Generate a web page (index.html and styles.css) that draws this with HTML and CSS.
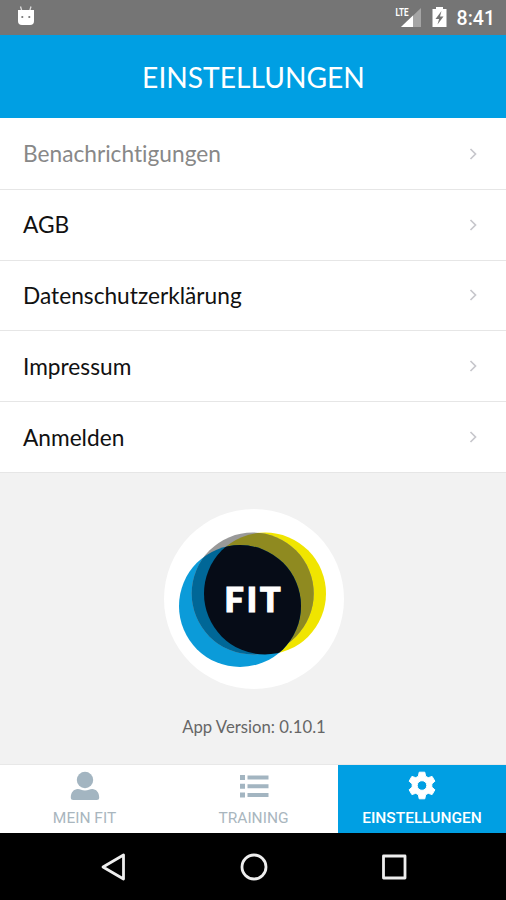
FILE: index.html
```
<!DOCTYPE html>
<html lang="de">
<head>
    <meta charset="UTF-8">
    <meta name="viewport" content="width=device-width, initial-scale=1.0">
    <title>Einstellungen</title>
    <link rel="stylesheet" href="styles.css">
</head>
<body>
    <div class="statusbar">
        <svg class="droid" width="18" height="22" viewBox="0 0 18 22">
            <path d="M3.500 .5l1.500 5M14 .5l-1.500 5" stroke="#ddd" stroke-width="1.300"/>
            <path d="M1 4h16v11q0 4-4 4H5q-4 0-4-4z" fill="#fff"/>
            <circle cx="5.300" cy="11" r="1.100" fill="#777"/>
            <circle cx="12.300" cy="11" r="1.100" fill="#777"/>
        </svg>
        <div class="status-icons">
            <svg width="27" height="22" viewBox="0 0 27 22">
                <path d="M26 2v19H6z" fill="#a5a5a5"/>
                <path d="M18 9.600V21H6z" fill="#fff"/>
                <text class="lte" x="0.500" y="9.500" textLength="13" lengthAdjust="spacingAndGlyphs">LTE</text>
            </svg>
            <svg width="15" height="22" viewBox="0 0 15 22">
                <path d="M4 1h7v2h3.500v18H.5V3H4z" fill="#fff"/>
                <path d="M9.500 5L3.500 13h3.600L5.500 18.500l6-8H8z" fill="#747474"/>
            </svg>
            <span class="clock">8:41</span>
        </div>
    </div>
    <header class="header">
        <h1>EINSTELLUNGEN</h1>
    </header>
    <main class="content">
        <ul class="list">
            <li class="disabled"><span>Benachrichtigungen</span><svg class="chevron" viewBox="0 0 8 12"><path d="M1.500 1l5 5-5 5"/></svg></li>
            <li><span>AGB</span><svg class="chevron" viewBox="0 0 8 12"><path d="M1.500 1l5 5-5 5"/></svg></li>
            <li><span>Datenschutzerklärung</span><svg class="chevron" viewBox="0 0 8 12"><path d="M1.500 1l5 5-5 5"/></svg></li>
            <li><span>Impressum</span><svg class="chevron" viewBox="0 0 8 12"><path d="M1.500 1l5 5-5 5"/></svg></li>
            <li><span>Anmelden</span><svg class="chevron" viewBox="0 0 8 12"><path d="M1.500 1l5 5-5 5"/></svg></li>
        </ul>
        <div class="about">
            <svg class="logo" width="180" height="180" viewBox="0 0 180 180">
                <defs>
                    <clipPath id="blue"><circle cx="76" cy="97" r="61"/></clipPath>
                    <clipPath id="yellow"><circle cx="101" cy="84.500" r="61"/></clipPath>
                </defs>
                <circle cx="90" cy="90" r="90" fill="#fff"/>
                <circle cx="101" cy="84.500" r="61" fill="#f0e500"/>
                <circle cx="76" cy="97" r="61" fill="#0b9bd9"/>
                <circle cx="88.700" cy="84.500" r="61" fill="#999"/>
                <circle cx="88.700" cy="84.500" r="61" fill="#8f8a20" clip-path="url(#yellow)"/>
                <circle cx="88.700" cy="84.500" r="61" fill="#006797" clip-path="url(#blue)"/>
                <g clip-path="url(#blue)">
                    <circle cx="101" cy="84.500" r="61" fill="#060c17"/>
                </g>
                <text class="logo-text" x="60.500" y="102.500" textLength="56">FIT</text>
            </svg>
            <p class="version">App Version: 0.10.1</p>
        </div>
    </main>
    <nav class="tabs">
        <div class="tab">
            <svg width="30" height="30" viewBox="0 0 30 30">
                <circle cx="15" cy="9" r="8.200"/>
                <path d="M.8 26.500c0-5 3-8.500 7-8.500 2.500 0 4 1.500 7.200 1.500s4.700-1.500 7.200-1.500c4 0 7 3.500 7 8.500q0 2.500-2.500 2.500H3.300q-2.500 0-2.500-2.500z"/>
            </svg>
            <span>MEIN FIT</span>
        </div>
        <div class="tab">
            <svg width="30" height="30" viewBox="0 0 30 30">
                <path d="M1 4h5v5H1zM8.500 4.500h21v4h-21zM1 12.700h5v5H1zM8.500 13.200h21v4h-21zM1 21.500h5v5H1zM8.500 22h21v4h-21z"/>
            </svg>
            <span>TRAINING</span>
        </div>
        <div class="tab active">
            <svg width="30" height="30" viewBox="0 0 30 30">
                <path fill-rule="evenodd" d="M12.200 1.200h5.600l.8 4 2.600 1.500 3.900-1.300 2.800 4.800-3.100 2.700v3.200l3.100 2.700-2.800 4.800-3.900-1.300-2.600 1.500-.8 4h-5.600l-.8-4-2.600-1.500-3.900 1.300-2.800-4.800 3.100-2.700v-3.200l-3.100-2.700 2.800-4.800 3.900 1.300 2.600-1.500zM15 9.700a4.800 4.800 0 1 0 0 9.600 4.800 4.800 0 0 0 0-9.600z" stroke-width="1" stroke-linejoin="round"/>
            </svg>
            <span>EINSTELLUNGEN</span>
        </div>
    </nav>
    <div class="navbar">
        <svg width="28" height="28" viewBox="0 0 28 28"><path d="M24.500 2v24L4 14z"/></svg>
        <svg width="28" height="28" viewBox="0 0 28 28"><circle cx="14" cy="14" r="12"/></svg>
        <svg width="28" height="28" viewBox="0 0 28 28"><path d="M3.500 3h21.500v22H3.500z"/></svg>
    </div>
</body>
</html>
```

FILE: styles.css
```
* {
    box-sizing: border-box;
}
body {
    display: flex;
    flex-direction: column;
    height: 900px;
    margin: 0;
    font-family: Lato, sans-serif;
    font-variant-ligatures: none;
    background-color: #f2f2f2;
    color: #111;
}
.statusbar {
    display: flex;
    justify-content: space-between;
    height: 34.500px;
    padding: 6px 11px 0 17px;
    background-color: #757575;
}
.status-icons {
    display: flex;
    gap: 10px;
}
.lte {
    font: bold 11px Roboto, sans-serif;
    fill: #fff;
}
.clock {
    font: 500 19.500px/25px Roboto, sans-serif;
    color: #fff;
}
.header {
    height: 83.500px;
    background-color: #009fe3;
    text-align: center;
}
h1 {
    margin: 0;
    padding-left: 1px;
    font-size: 28.200px;
    font-weight: 400;
    line-height: 84px;
    color: #fff;
}
.content {
    flex: 1;
}
.list {
    margin: 0;
    padding: 1px 0 0;
    list-style: none;
    background-color: #fff;
}
.list li {
    display: flex;
    align-items: center;
    justify-content: space-between;
    height: 70.800px;
    padding: 0 29px 0 23px;
    border-bottom: 1.500px solid #e6e6e6;
    font-size: 22.700px;
}
.list .disabled {
    color: #888;
}
.chevron {
    width: 8px;
    height: 12px;
    fill: none;
    stroke: #c7c7cc;
    stroke-width: 1.700;
}
.about {
    padding: 36px 0 0 2px;
    text-align: center;
}
.logo {
    display: block;
    margin: 0 auto;
}
.logo-text {
    font: 900 34px Lato, sans-serif;
    fill: #fff;
    stroke: #fff;
    stroke-width: 1.200;
}
.version {
    margin: 27px 0 0;
    font-size: 16.700px;
    line-height: 22px;
    color: #666;
}
.tabs {
    display: flex;
    height: 69px;
    border-top: 1px solid #e8e8e8;
    background-color: #fff;
}
.tab {
    display: flex;
    flex: 0 0 169px;
    flex-direction: column;
    align-items: center;
    padding-top: 6px;
    font: 15.500px/20px Roboto, sans-serif;
    color: #a9b6be;
    fill: #a3b5c1;
}
.tab span {
    margin-top: 7px;
}
.tab.active {
    flex: 1;
    background-color: #009fe3;
    color: #fff;
    fill: #fff;
    font-weight: 500;
}
.tab.active svg {
    stroke: #fff;
}
.navbar {
    display: flex;
    justify-content: space-between;
    align-items: center;
    height: 67px;
    padding: 0 98px 0 99px;
    background-color: #000;
    fill: none;
    stroke: #eee;
    stroke-width: 2.800;
    stroke-linejoin: round;
}
```
